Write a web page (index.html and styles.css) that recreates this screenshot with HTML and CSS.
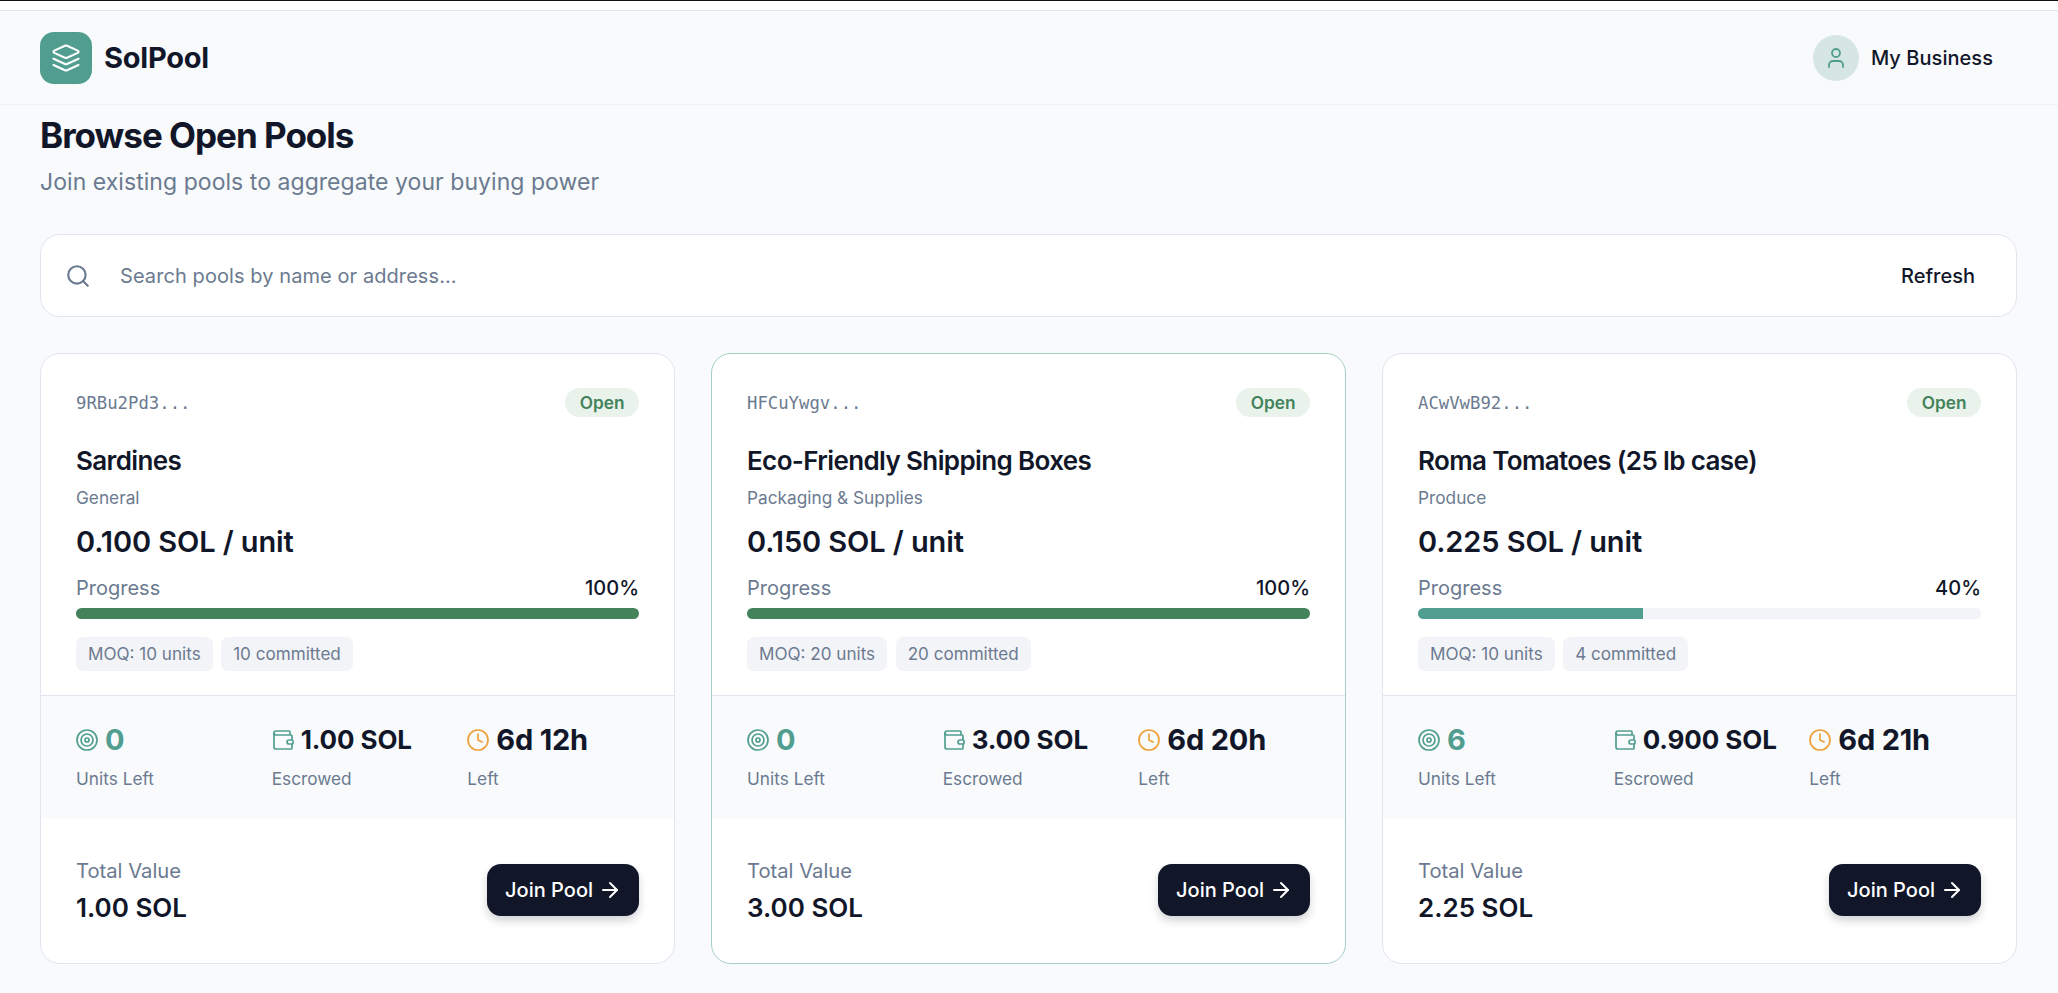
FILE: index.html
```html
<!DOCTYPE html>
<html lang="en">
<head>
<meta charset="utf-8">
<title>SolPool</title>
<link rel="stylesheet" href="styles.css">
</head>
<body>
<svg class="sprite" aria-hidden="true">
  <symbol id="i-layers" viewBox="0 0 24 24"><path d="m12.83 2.18a2 2 0 0 0-1.66 0L2.6 6.08a1 1 0 0 0 0 1.83l8.58 3.91a2 2 0 0 0 1.66 0l8.58-3.9a1 1 0 0 0 0-1.83Z"/><path d="m22 17.65-9.17 4.16a2 2 0 0 1-1.66 0L2 17.65"/><path d="m22 12.65-9.17 4.16a2 2 0 0 1-1.66 0L2 12.65"/></symbol>
  <symbol id="i-user" viewBox="0 0 24 24"><path d="M19 21v-2a4 4 0 0 0-4-4H9a4 4 0 0 0-4 4v2"/><circle cx="12" cy="7" r="4"/></symbol>
  <symbol id="i-search" viewBox="0 0 24 24"><circle cx="11" cy="11" r="8"/><path d="m21 21-4.3-4.3"/></symbol>
  <symbol id="i-target" viewBox="0 0 24 24"><circle cx="12" cy="12" r="10"/><circle cx="12" cy="12" r="6"/><circle cx="12" cy="12" r="2"/></symbol>
  <symbol id="i-wallet" viewBox="0 0 24 24"><path d="M19 7V4a1 1 0 0 0-1-1H5a2 2 0 0 0 0 4h15a1 1 0 0 1 1 1v4h-3a2 2 0 0 0 0 4h3a1 1 0 0 0 1-1v-2a1 1 0 0 0-1-1"/><path d="M3 5v14a2 2 0 0 0 2 2h15a1 1 0 0 0 1-1v-4"/></symbol>
  <symbol id="i-clock" viewBox="0 0 24 24"><circle cx="12" cy="12" r="10"/><path d="M12 6v6l4 2"/></symbol>
  <symbol id="i-arrow" viewBox="0 0 24 24"><path d="M5 12h14"/><path d="m12 5 7 7-7 7"/></symbol>
</svg>

<div class="topstrip"></div>
<header class="topbar">
  <div class="brand">
    <span class="brand-mark"><svg class="icon icon-logo"><use href="#i-layers"/></svg></span>
    <span class="brand-name">SolPool</span>
  </div>
  <div class="account">
    <span class="avatar"><svg class="icon icon-user"><use href="#i-user"/></svg></span>
    <span class="account-name">My Business</span>
  </div>
</header>

<main class="page">
  <h1 class="page-title">Browse Open Pools</h1>
  <p class="page-sub">Join existing pools to aggregate your buying power</p>

  <div class="searchbar">
    <svg class="icon icon-search"><use href="#i-search"/></svg>
    <span class="search-placeholder">Search pools by name or address...</span>
    <button class="refresh">Refresh</button>
  </div>

  <section class="pools">
    <article class="pool">
      <div class="pool-main">
        <div class="pool-head"><span class="addr">9RBu2Pd3...</span><span class="badge">Open</span></div>
        <h2 class="pool-name">Sardines</h2>
        <div class="pool-cat">General</div>
        <div class="pool-price">0.100 SOL / unit</div>
        <div class="progress-row"><span class="progress-label">Progress</span><span class="progress-val">100%</span></div>
        <div class="bar"><div class="bar-fill done" style="width:100%"></div></div>
        <div class="chips"><span class="chip">MOQ: 10 units</span><span class="chip">10 committed</span></div>
      </div>
      <div class="stats">
        <div class="stat"><div class="stat-top"><svg class="icon icon-stat teal"><use href="#i-target"/></svg><span class="stat-val teal">0</span></div><div class="stat-label">Units Left</div></div>
        <div class="stat"><div class="stat-top"><svg class="icon icon-stat teal"><use href="#i-wallet"/></svg><span class="stat-val stat-sol">1.00 SOL</span></div><div class="stat-label">Escrowed</div></div>
        <div class="stat"><div class="stat-top"><svg class="icon icon-stat amber"><use href="#i-clock"/></svg><span class="stat-val">6d 12h</span></div><div class="stat-label">Left</div></div>
      </div>
      <div class="pool-foot">
        <div><div class="total-label">Total Value</div><div class="total-val">1.00 SOL</div></div>
        <button class="join">Join Pool<svg class="icon icon-arrow"><use href="#i-arrow"/></svg></button>
      </div>
    </article>

    <article class="pool pool-active">
      <div class="pool-main">
        <div class="pool-head"><span class="addr">HFCuYwgv...</span><span class="badge">Open</span></div>
        <h2 class="pool-name">Eco-Friendly Shipping Boxes</h2>
        <div class="pool-cat">Packaging &amp; Supplies</div>
        <div class="pool-price">0.150 SOL / unit</div>
        <div class="progress-row"><span class="progress-label">Progress</span><span class="progress-val">100%</span></div>
        <div class="bar"><div class="bar-fill done" style="width:100%"></div></div>
        <div class="chips"><span class="chip">MOQ: 20 units</span><span class="chip">20 committed</span></div>
      </div>
      <div class="stats">
        <div class="stat"><div class="stat-top"><svg class="icon icon-stat teal"><use href="#i-target"/></svg><span class="stat-val teal">0</span></div><div class="stat-label">Units Left</div></div>
        <div class="stat"><div class="stat-top"><svg class="icon icon-stat teal"><use href="#i-wallet"/></svg><span class="stat-val stat-sol">3.00 SOL</span></div><div class="stat-label">Escrowed</div></div>
        <div class="stat"><div class="stat-top"><svg class="icon icon-stat amber"><use href="#i-clock"/></svg><span class="stat-val">6d 20h</span></div><div class="stat-label">Left</div></div>
      </div>
      <div class="pool-foot">
        <div><div class="total-label">Total Value</div><div class="total-val">3.00 SOL</div></div>
        <button class="join">Join Pool<svg class="icon icon-arrow"><use href="#i-arrow"/></svg></button>
      </div>
    </article>

    <article class="pool">
      <div class="pool-main">
        <div class="pool-head"><span class="addr">ACwVwB92...</span><span class="badge">Open</span></div>
        <h2 class="pool-name">Roma Tomatoes (25 lb case)</h2>
        <div class="pool-cat">Produce</div>
        <div class="pool-price">0.225 SOL / unit</div>
        <div class="progress-row"><span class="progress-label">Progress</span><span class="progress-val">40%</span></div>
        <div class="bar"><div class="bar-fill" style="width:40%"></div></div>
        <div class="chips"><span class="chip">MOQ: 10 units</span><span class="chip">4 committed</span></div>
      </div>
      <div class="stats">
        <div class="stat"><div class="stat-top"><svg class="icon icon-stat teal"><use href="#i-target"/></svg><span class="stat-val teal">6</span></div><div class="stat-label">Units Left</div></div>
        <div class="stat"><div class="stat-top"><svg class="icon icon-stat teal"><use href="#i-wallet"/></svg><span class="stat-val stat-sol">0.900 SOL</span></div><div class="stat-label">Escrowed</div></div>
        <div class="stat"><div class="stat-top"><svg class="icon icon-stat amber"><use href="#i-clock"/></svg><span class="stat-val">6d 21h</span></div><div class="stat-label">Left</div></div>
      </div>
      <div class="pool-foot">
        <div><div class="total-label">Total Value</div><div class="total-val">2.25 SOL</div></div>
        <button class="join">Join Pool<svg class="icon icon-arrow"><use href="#i-arrow"/></svg></button>
      </div>
    </article>
  </section>
</main>
</body>
</html>
```

FILE: styles.css
```css
* { box-sizing: border-box; }

html, body { margin: 0; height: 100%; }

body {
  background: #f8fafc;
  color: #111729;
  font-family: Inter, "Liberation Sans", sans-serif;
  overflow: hidden;
}

.sprite { display: none; }

.icon {
  display: block;
  flex: none;
  fill: none;
  stroke: currentColor;
  stroke-width: 2;
  stroke-linecap: round;
  stroke-linejoin: round;
}

.topstrip {
  height: 10px;
  background: #fff;
  border-top: 1px solid #111;
}

.topbar {
  display: flex;
  align-items: center;
  justify-content: space-between;
  height: 95px;
  padding: 0 65px 0 40px;
  background: #f9fafb;
  border-top: 1px solid #e4e5e7;
  border-bottom: 1px solid #eef1f4;
}

.brand { display: flex; align-items: center; gap: 12px; }

.brand-mark {
  display: flex;
  align-items: center;
  justify-content: center;
  width: 52px;
  height: 52px;
  border-radius: 14px;
  background: #519e90;
  color: #fff;
}

.icon-logo { width: 30px; height: 30px; stroke-width: 1.7; }

.brand-name { font-size: 29px; font-weight: 700; line-height: 36px; letter-spacing: -0.25px; }

.account { display: flex; align-items: center; gap: 12px; }

.avatar {
  display: flex;
  align-items: center;
  justify-content: center;
  width: 46px;
  height: 46px;
  border-radius: 50%;
  background: #d5e6e3;
  color: #519e90;
}

.icon-user { width: 24px; height: 24px; stroke-width: 1.8; }

.account-name { font-size: 20px; font-weight: 500; line-height: 28px; letter-spacing: 0.05px; }

.page { padding: 8px 41px 0 40px; }

.page-title {
  margin: 0;
  font-size: 35px;
  font-weight: 700;
  line-height: 44px;
  letter-spacing: -1px;
}

.page-sub {
  margin: 10px 0 0;
  font-size: 23px;
  line-height: 30px;
  letter-spacing: 0.05px;
  color: #6b7a90;
}

.searchbar {
  display: flex;
  align-items: center;
  height: 83px;
  margin-top: 37px;
  padding: 0 41px 0 24px;
  background: #fff;
  border: 1px solid #e0e5ee;
  border-radius: 20px;
}

.icon-search { width: 26px; height: 26px; color: #6b7a90; }

.search-placeholder {
  flex: 1;
  margin-left: 29px;
  font-size: 20px;
  line-height: 28px;
  letter-spacing: 0.08px;
  color: #6b7a90;
}

.refresh {
  padding: 0;
  border: 0;
  background: none;
  color: #111729;
  font: 500 20px/28px Inter, "Liberation Sans", sans-serif;
}

.pools {
  display: grid;
  grid-template-columns: repeat(3, 1fr);
  gap: 36px;
  margin-top: 36px;
}

.pool {
  height: 611px;
  background: #fff;
  border: 1px solid #e0e5ee;
  border-radius: 20px;
  overflow: hidden;
}

.pool-active { border-color: #a5d0c8; }

.pool-main { padding: 34px 35px 24px; }

.pool-head { display: flex; align-items: center; justify-content: space-between; }

.addr {
  font-family: "DejaVu Sans Mono", "Liberation Mono", monospace;
  font-size: 17.3px;
  line-height: 24px;
  color: #6b7a90;
}

.badge {
  display: block;
  height: 29px;
  padding: 0 14.5px;
  border-radius: 15px;
  background: #e9f3ec;
  color: #43825a;
  font-size: 17.25px;
  font-weight: 600;
  line-height: 29px;
}

.pool-name {
  margin: 28px 0 0;
  font-size: 26px;
  font-weight: 600;
  line-height: 32px;
  letter-spacing: -0.63px;
}

.pool-cat {
  margin-top: 10px;
  font-size: 17.25px;
  line-height: 22px;
  color: #6b7a90;
}

.pool-price {
  margin-top: 15px;
  font-size: 29px;
  font-weight: 600;
  line-height: 36px;
  letter-spacing: -0.1px;
}

.progress-row {
  display: flex;
  justify-content: space-between;
  margin-top: 15px;
  font-size: 20px;
  line-height: 26px;
}

.progress-label { color: #6b7a90; }

.progress-val { font-weight: 500; }

.bar {
  height: 11px;
  margin-top: 7px;
  border-radius: 6px;
  background: #f3f4f7;
  overflow: hidden;
}

.bar-fill { height: 100%; background: #519e90; }

.bar-fill.done { background: #43825a; }

.chips { display: flex; gap: 8.5px; margin-top: 18px; }

.chip {
  height: 34px;
  padding: 0 12px;
  border-radius: 7px;
  background: #f3f4f7;
  color: #6b7a90;
  font-size: 17.1px;
  line-height: 34px;
}

.stats {
  display: grid;
  grid-template-columns: repeat(3, 1fr);
  gap: 24px;
  height: 123px;
  padding: 28px 35px 0;
  background: #f8fafc;
  border-top: 1px solid #e0e5ee;
}

.stat-top { display: flex; align-items: center; gap: 6px; height: 32px; }

.icon-stat { width: 24px; height: 24px; margin-left: -1px; stroke-width: 1.7; }

.teal { color: #519e90; }

.amber { color: #eda13a; }

.stat-val { font-size: 29px; font-weight: 700; line-height: 32px; white-space: nowrap; letter-spacing: -0.2px; }

.stat-sol { font-size: 26px; letter-spacing: -0.1px; }

.stat-label {
  margin-top: 12px;
  font-size: 17.25px;
  line-height: 22px;
  color: #6b7a90;
}

.pool-foot {
  display: flex;
  align-items: center;
  justify-content: space-between;
  padding: 41px 35px 0;
}

.total-label { font-size: 20.2px; line-height: 24px; color: #6b7a90; }

.total-val { margin-top: 10px; font-size: 26px; font-weight: 600; line-height: 30px; }

.join {
  display: flex;
  align-items: center;
  gap: 5px;
  height: 52px;
  margin-bottom: 3px;
  padding: 0 17px 0 18px;
  border: 0;
  border-radius: 14px;
  background: #111729;
  color: #fff;
  font: 500 20px/28px Inter, "Liberation Sans", sans-serif;
  box-shadow: 0 5px 8px rgba(17, 23, 41, 0.18);
}

.icon-arrow { width: 24px; height: 24px; }
```
